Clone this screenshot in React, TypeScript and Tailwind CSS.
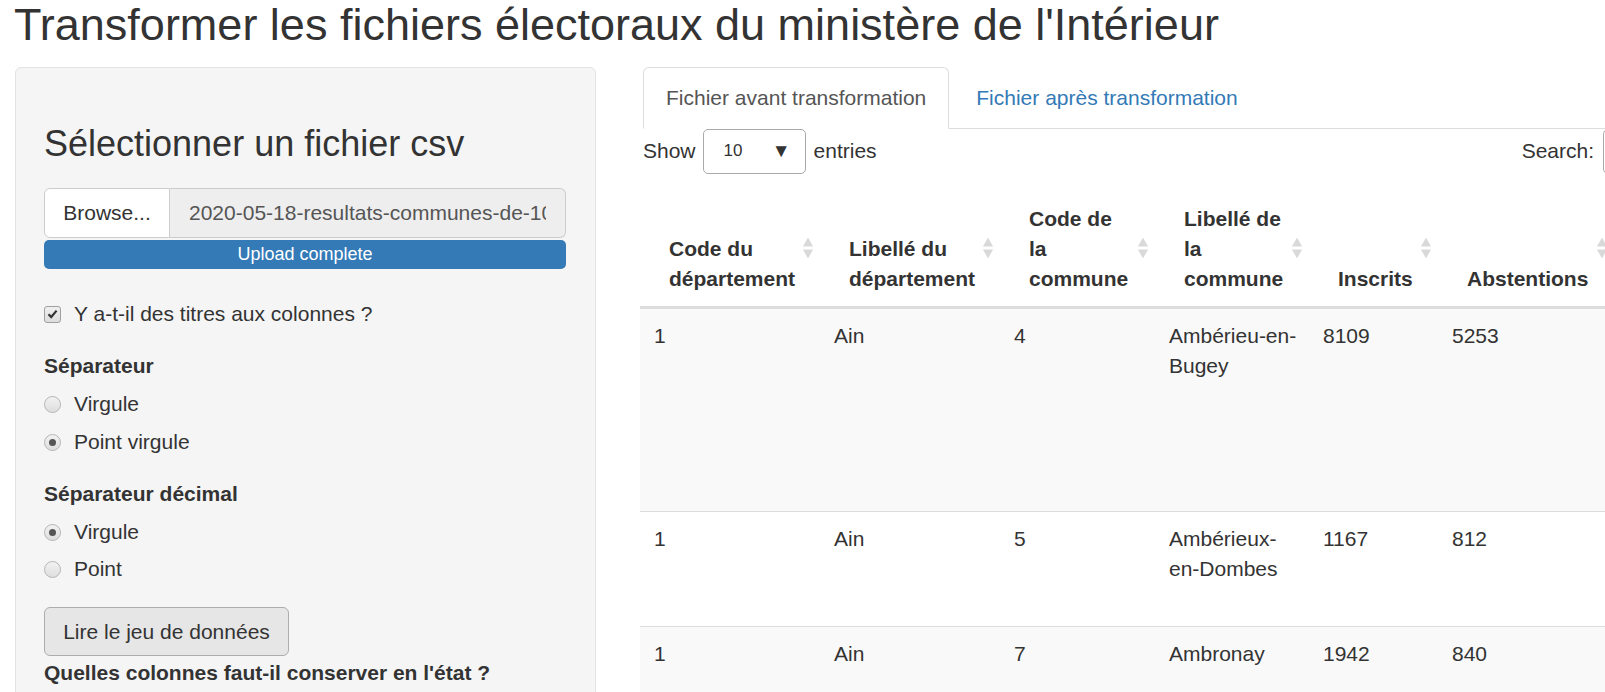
import React from "react";

function SortIcon() {
  return (
    <svg
      className="absolute right-[7px] top-1/2 -translate-y-1/2"
      width="10"
      height="21"
      viewBox="0 0 10 21"
    >
      <polygon points="5,0 10,9 0,9" fill="#d9d9d9" />
      <polygon points="0,12 10,12 5,21" fill="#d9d9d9" />
    </svg>
  );
}

function Radio({ checked, label }: { checked?: boolean; label: string }) {
  return (
    <div className="flex items-center h-[30px]">
      <span className="w-[17px] h-[17px] rounded-full border border-[#b5b5b5] bg-gradient-to-b from-[#f2f2f2] to-[#dedede] flex items-center justify-center">
        {checked && <span className="w-[7px] h-[7px] rounded-full bg-[#555]" />}
      </span>
      <span className="ml-[13px]">{label}</span>
    </div>
  );
}

const headers = [
  { label: ["Code du", "département"], w: "w-[180px]" },
  { label: ["Libellé du", "département"], w: "w-[180px]" },
  { label: ["Code de", "la", "commune"], w: "w-[155px]" },
  { label: ["Libellé de", "la", "commune"], w: "w-[154px]" },
  { label: ["Inscrits"], w: "w-[129px]" },
  { label: ["Abstentions"], w: "w-[176px]" },
];

const rows = [
  { cells: ["1", "Ain", "4", ["Ambérieu-en-", "Bugey"], "8109", "5253"], h: "h-[204px]", bg: "bg-[#f9f9f9]" },
  { cells: ["1", "Ain", "5", ["Ambérieux-", "en-Dombes"], "1167", "812"], h: "h-[115px]", bg: "bg-white" },
  { cells: ["1", "Ain", "7", "Ambronay", "1942", "840"], h: "h-[80px]", bg: "bg-[#f9f9f9]" },
];

export default function App() {
  return (
    <div className="w-[1605px] h-[692px] overflow-hidden bg-white text-[#333] font-['Liberation_Sans',Arial,sans-serif] text-[21px] leading-[30px]">
      <h1 className="-mt-px pl-[14px] text-[45px] leading-[52px] font-normal whitespace-nowrap">
        Transformer les fichiers électoraux du ministère de l'Intérieur
      </h1>

      <div className="flex items-start mt-[16px]">
        {/* sidebar */}
        <div className="ml-[15px] w-[581px] h-[640px] shrink-0 bg-[#f5f5f5] border border-[#e3e3e3] rounded-[6px] pl-[28px] pr-[29px]">
          <h3 className="mt-[56px] text-[36px] leading-[40px] font-normal whitespace-nowrap">
            Sélectionner un fichier csv
          </h3>

          <div className="mt-[24px] flex h-[50px]">
            <div className="w-[126px] shrink-0 bg-white border border-[#ccc] rounded-l-[6px] flex items-center justify-center">
              Browse...
            </div>
            <div className="flex-1 min-w-0 bg-[#eee] border border-l-0 border-[#ccc] rounded-r-[6px] flex items-center pl-[19px] pr-[19px] text-[#555]">
              <span className="whitespace-nowrap overflow-hidden">
                2020-05-18-resultats-communes-de-1000-habitants
              </span>
            </div>
          </div>
          <div className="mt-[2px] h-[29px] rounded-[5px] bg-[#337ab7] text-white text-[18px] leading-[29px] text-center">
            Upload complete
          </div>

          <div className="mt-[30px] flex items-center h-[30px]">
            <span className="w-[17px] h-[17px] rounded-[3px] border border-[#a0a0a0] bg-gradient-to-b from-[#f0f0f0] to-[#dcdcdc] flex items-center justify-center">
              <svg width="11" height="10" viewBox="0 0 11 10">
                <path d="M1.5 5.2 L4.2 8 L9.6 1.6" stroke="#333" strokeWidth="2.2" fill="none" />
              </svg>
            </span>
            <span className="ml-[13px]">Y a-t-il des titres aux colonnes ?</span>
          </div>

          <div className="mt-[22px] font-bold">Séparateur</div>
          <div className="mt-[8px]">
            <Radio label="Virgule" />
          </div>
          <div className="mt-[8px]">
            <Radio checked label="Point virgule" />
          </div>

          <div className="mt-[22px] font-bold">Séparateur décimal</div>
          <div className="mt-[8px]">
            <Radio checked label="Virgule" />
          </div>
          <div className="mt-[7px]">
            <Radio label="Point" />
          </div>

          <div className="mt-[23px] w-[245px] h-[49px] bg-[#e6e6e6] border border-[#adadad] rounded-[6px] flex items-center justify-center">
            Lire le jeu de données
          </div>
          <div className="mt-[2px] font-bold whitespace-nowrap">
            Quelles colonnes faut-il conserver en l'état ?
          </div>
        </div>

        {/* main */}
        <div className="ml-[47px] w-[1160px] shrink-0">
          <div className="flex border-b border-[#ddd] h-[62px]">
            <div className="h-[62px] px-[22px] bg-white border border-[#ddd] border-b-white rounded-t-[6px] flex items-center text-[#555] whitespace-nowrap">
              Fichier avant transformation
            </div>
            <div className="ml-[5px] h-[61px] px-[22px] flex items-center text-[#337ab7] whitespace-nowrap">
              Fichier après transformation
            </div>
          </div>

          <div className="flex items-center h-[46px] -mt-[1px]">
            <span>Show</span>
            <div className="ml-[7px] w-[103px] h-[45px] border border-[#aaa] rounded-[5px] bg-white flex items-center pl-[20px] pr-[14px] text-[17px]">
              <span>10</span>
              <span className="ml-auto text-[19px] text-[#333]">▼</span>
            </div>
            <span className="ml-[8px]">entries</span>
            <span className="ml-auto">Search:</span>
            <div className="ml-[9px] w-[200px] h-[45px] border border-[#aaa] rounded-[5px] bg-white" />
          </div>

          <table className="mt-[15px] -ml-[3px] table-fixed border-collapse">
            <thead>
              <tr className="border-b-[3px] border-[#ddd]">
                {headers.map((h, i) => (
                  <th
                    key={i}
                    className={`${h.w} relative text-left align-bottom font-bold pl-[29px] pr-[20px] pt-[15px] pb-[12px] whitespace-nowrap`}
                  >
                    {h.label.map((l, j) => (
                      <div key={j}>{l}</div>
                    ))}
                    <SortIcon />
                  </th>
                ))}
              </tr>
            </thead>
            <tbody>
              {rows.map((r, i) => (
                <tr key={i} className={`${r.bg} ${r.h} ${i > 0 ? "border-t border-[#ddd]" : ""}`}>
                  {r.cells.map((c, j) => (
                    <td key={j} className="align-top pl-[14px] pr-[12px] pt-[12px] whitespace-nowrap">
                      {Array.isArray(c) ? c.map((l, k) => <div key={k}>{l}</div>) : c}
                    </td>
                  ))}
                </tr>
              ))}
            </tbody>
          </table>
        </div>
      </div>
    </div>
  );
}
